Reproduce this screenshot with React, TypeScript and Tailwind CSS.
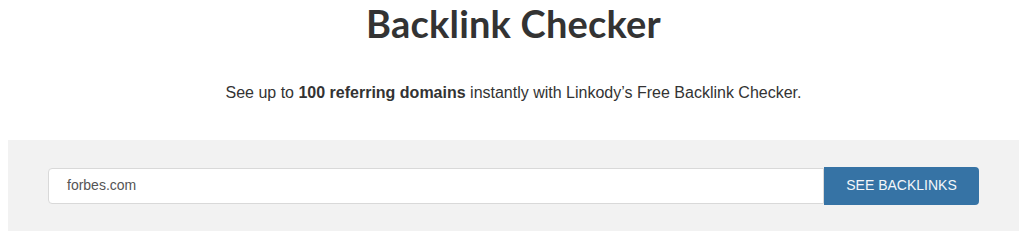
export default function App() {
  return (
    <div className="bg-white w-[1024px] h-[243px] pl-[8px] pr-[5px]">
      <h1 className="text-center text-[38px] leading-[46px] font-bold text-[#333] tracking-[0.2px]" style={{ fontFamily: 'Lato, "Open Sans", sans-serif' }}>
        Backlink Checker
      </h1>
      <p className="text-center text-[16px] text-[#333] mt-[37px] leading-[20px]" style={{ fontFamily: '"Liberation Sans", Arial, sans-serif' }}>
        See up to <b>100 referring domains</b> instantly with Linkody’s Free Backlink Checker.
      </p>
      <div className="mt-[37px] bg-[#f2f2f2] h-[91px] px-[40px] flex items-center" style={{ fontFamily: '"Liberation Sans", Arial, sans-serif' }}>
        <div className="flex-1 h-[36px] bg-white border border-[#d9d9d9] rounded-l-[4px] flex items-center pl-[18px] text-[14px] text-[#555]">
          forbes.com
        </div>
        <button className="w-[155px] h-[38px] bg-[#3673a5] text-[#f4f7fa] text-[14px] rounded-r-[4px] uppercase">
          See Backlinks
        </button>
      </div>
    </div>
  );
}
